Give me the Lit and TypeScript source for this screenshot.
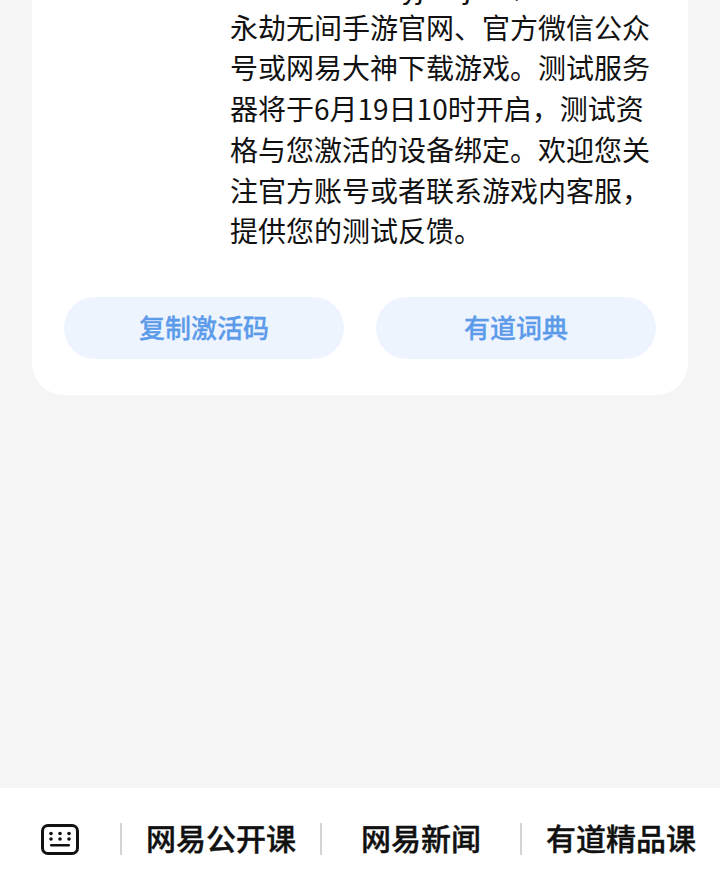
import { LitElement, html, css } from "lit";
import { customElement } from "lit/decorators.js";

@customElement("app-root")
export class AppRoot extends LitElement {
  static styles = css`
    :host {
      display: flex;
      flex-direction: column;
      height: 883px;
      width: 720px;
      overflow: hidden;
      background: #f5f5f5;
      font-family: "Noto Sans CJK SC", "Roboto", sans-serif;
    }
    .main { flex: 1; min-height: 0; padding: 0 32px; overflow: hidden; }
    .card {
      background: #fff;
      border-radius: 0 0 32px 32px;
      height: 395px;
      box-sizing: border-box;
      padding: 0 32px 36px;
      display: flex;
      flex-direction: column;
      justify-content: flex-end;
    }
    .text {
      margin: 0 0 46px 167px;
      width: 424px;
      font-size: 28px;
      line-height: 40.7px;
      color: #111;
      transform: translateX(-1px);
    }
    .clip { display: block; padding-left: 172px; }
    .buttons { display: flex; gap: 32px; }
    .btn {
      flex: 1;
      height: 62px;
      border-radius: 31px;
      background: #edf4fe;
      color: #5b9bea;
      font-size: 26px;
      font-weight: 500;
      -webkit-text-stroke: 0.3px #5b9bea;
      display: flex;
      align-items: center;
      justify-content: center;
      padding-bottom: 3px;
      box-sizing: border-box;
    }
    .bar {
      height: 95px;
      flex: none;
      background: #fff;
      display: flex;
      align-items: center;
      padding-top: 7px;
      box-sizing: border-box;
      color: #111;
      font-size: 30px;
      font-weight: 500;
      -webkit-text-stroke: 0.4px #111;
    }
    .kbd { width: 120px; flex: none; display: flex; justify-content: center; }
    .item {
      height: 32px;
      display: flex;
      align-items: center;
      justify-content: center;
      border-left: 2px solid #d4d4d4;
      box-sizing: border-box;
      white-space: nowrap;
      padding-bottom: 5px;
      width: 200px;
    }
  `;
  render() {
    return html`
      <div class="main">
        <div class="card">
          <p class="text"><span class="clip">yjwujian，</span>永劫无间手游官网、官方微信公众号或网易大神下载游戏。测试服务器将于6月19日10时开启，测试资格与您激活的设备绑定。欢迎您关注官方账号或者联系游戏内客服，提供您的测试反馈。</p>
          <div class="buttons">
            <div class="btn">复制激活码</div>
            <div class="btn">有道词典</div>
          </div>
        </div>
      </div>
      <div class="bar">
        <div class="kbd">
          <svg width="38" height="31" viewBox="0 0 38 31" fill="none">
            <rect x="1.5" y="1.5" width="35" height="28" rx="5.5" stroke="#111" stroke-width="3"/>
            <g fill="#111">
              <circle cx="10" cy="9.5" r="1.8"/><circle cx="19" cy="9.5" r="1.8"/><circle cx="28" cy="9.5" r="1.8"/>
              <circle cx="10" cy="15" r="1.8"/><circle cx="19" cy="15" r="1.8"/><circle cx="28" cy="15" r="1.8"/>
              <rect x="9" y="20" width="20" height="2.6" rx="1.3"/>
            </g>
          </svg>
        </div>
        <div class="item">网易公开课</div>
        <div class="item">网易新闻</div>
        <div class="item">有道精品课</div>
      </div>
    `;
  }
}
